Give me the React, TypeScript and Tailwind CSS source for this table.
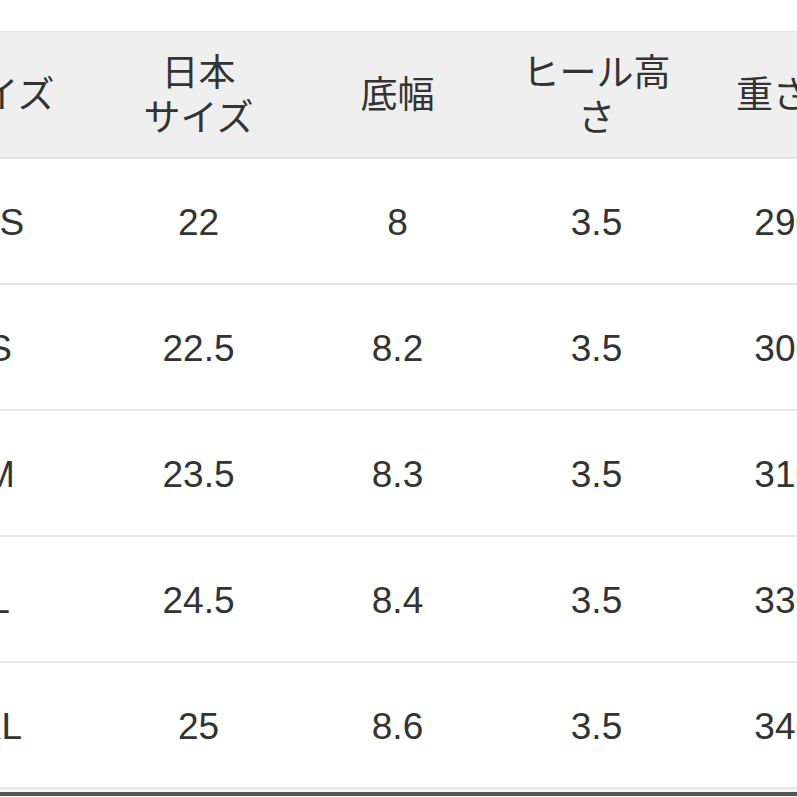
import React from 'react';

type Row = { size: string; jp: string; width: string; heel: string; weight: string };

const headers: React.ReactNode[] = [
  'サイズ',
  <>日本<br />サイズ</>,
  '底幅',
  <>ヒール高<br />さ</>,
  '重さ(g)',
];

const rows: Row[] = [
  { size: 'XS', jp: '22', width: '8', heel: '3.5', weight: '290g' },
  { size: 'S', jp: '22.5', width: '8.2', heel: '3.5', weight: '300g' },
  { size: 'M', jp: '23.5', width: '8.3', heel: '3.5', weight: '310g' },
  { size: 'L', jp: '24.5', width: '8.4', heel: '3.5', weight: '330g' },
  { size: 'XL', jp: '25', width: '8.6', heel: '3.5', weight: '340g' },
];

const font = { fontFamily: '"Liberation Sans", "Noto Sans CJK JP", sans-serif' };

const Cell: React.FC<{ children: React.ReactNode }> = ({ children }) => (
  <div className="w-[199px] shrink-0 flex items-center justify-center text-center whitespace-nowrap">
    {children}
  </div>
);

const App: React.FC = () => {
  return (
    <div className="w-[797px] h-[797px] overflow-hidden bg-white text-[#333] text-[37px]" style={font}>
      <div className="h-[31px]" />
      {/* header */}
      <div className="flex ml-[-100px] h-[128px] pt-[2px] bg-[#efefef] border-t border-[#e2e2e2] border-b-2 border-b-[#e6e6e6] leading-[45px]">
        {headers.map((h, i) => (
          <Cell key={i}>{h}</Cell>
        ))}
      </div>
      {/* body */}
      {rows.map((r) => (
        <div key={r.size} className="flex ml-[-100px] h-[126px] pt-[3px] border-b-2 border-[#e8e8e8]">
          <Cell>{r.size}</Cell>
          <Cell>{r.jp}</Cell>
          <Cell>{r.width}</Cell>
          <Cell>{r.heel}</Cell>
          <Cell>{r.weight}</Cell>
        </div>
      ))}
      <div className="h-[3px] bg-[#f4f4f4]" />
      <div className="h-[4px] bg-[#555]" />
    </div>
  );
};

export default App;
